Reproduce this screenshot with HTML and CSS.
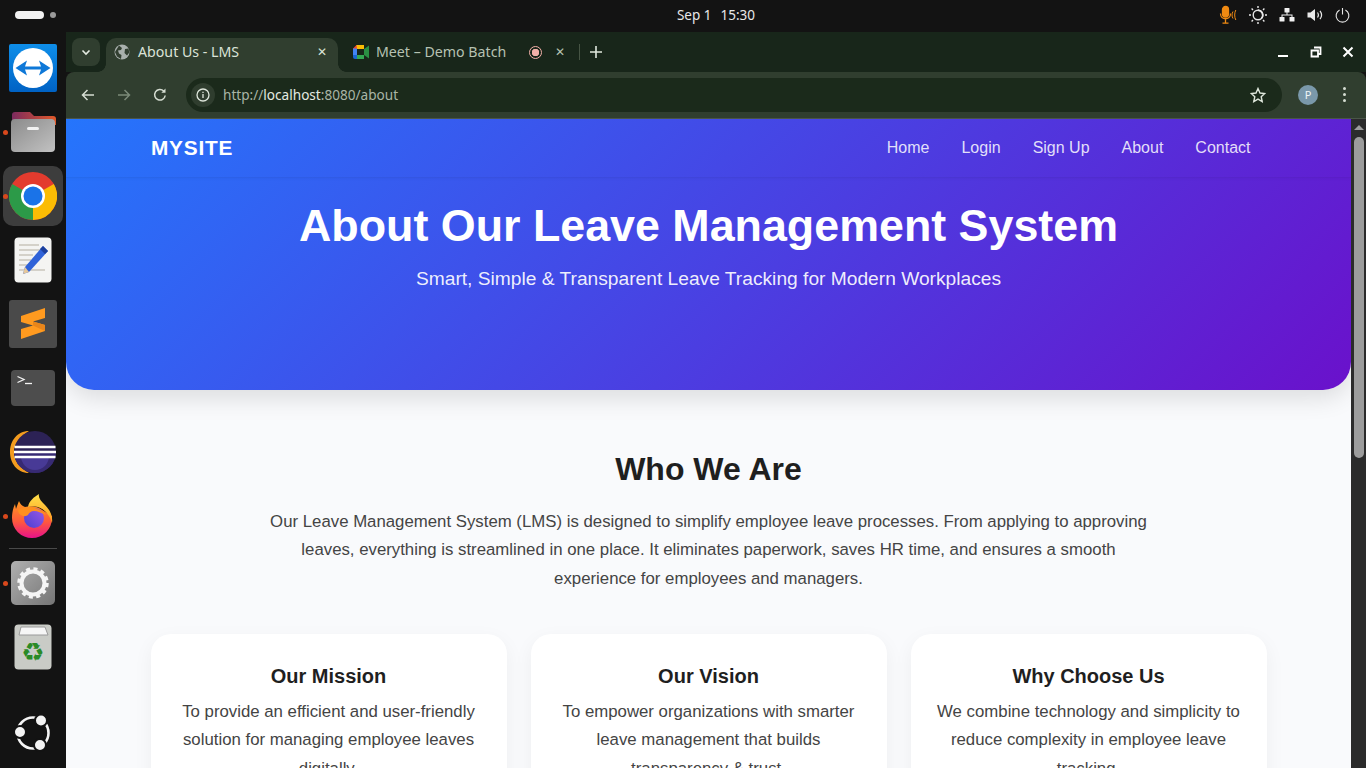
FILE: index.html
```html
<!DOCTYPE html>
<html lang="en">

<head>
    <meta charset="UTF-8">
    <meta name="viewport" content="width=device-width, initial-scale=1.0">
    <title>About Us - LMS</title>
    <link rel="stylesheet" href="styles.css">
</head>

<body>
    <header class="topbar">
        <div class="activities"><span class="pill"></span><span class="pill-dot"></span></div>
        <div></div>
        <div class="clock"><span>Sep 1</span><span>15:30</span></div>
        <div class="tray">
            <svg width="20" height="20" viewBox="-2 0 20 20" fill="none" stroke="#f08a12" stroke-width="1.3">
                <rect x="3.5" y="1.5" width="6" height="10.5" rx="3" fill="#f08a12" />
                <path d="M1.5 8.5c0 7 10 7 10 0M6.5 14v4M3.5 18.2h6" />
                <path d="M14 6.5c-1.300 2-1.300 5 0 7M16.800 5c-1.500 3-1.500 7 0 10" stroke-width="1" />
            </svg>
            <svg width="18" height="18" viewBox="0 0 18 18" fill="none" stroke="#e8e8e8" stroke-width="1.4">
                <circle cx="9" cy="9" r="4.8" />
                <path d="M9 4.2a4.8 4.8 0 0 1 3.4 8.2A5 5 0 0 0 9 4.2z" fill="#e8e8e8" />
                <path d="M9 0v2M9 16v2M0 9h2M16 9h2M2.6 2.6 4 4M14 14l1.4 1.4M2.6 15.4 4 14M14 4l1.4-1.4" />
            </svg>
            <svg width="16" height="14" viewBox="0 0 16 14" fill="#f2f2f2">
                <rect x="5.5" y="0" width="5" height="4.5" rx=".6" />
                <rect x="0.5" y="9" width="5" height="4.5" rx=".6" />
                <rect x="10.5" y="9" width="5" height="4.5" rx=".6" />
                <path d="M7.5 4h1v2.5h5V9h-1V7.5h-9V9h-1V6.5h5z" />
            </svg>
            <svg width="16" height="14" viewBox="0 0 16 14" fill="none" stroke="#e8e8e8" stroke-width="1.2">
                <path d="M0.5 4.5h3L8 1v12L3.5 9.5h-3z" fill="#e8e8e8" stroke="none" />
                <path d="M10.5 4.5c1 1.4 1 3.6 0 5M13 2.8c1.9 2.5 1.9 5.9 0 8.4" />
            </svg>
            <svg width="15" height="15" viewBox="0 0 15 15" fill="none" stroke="#e8e8e8" stroke-width="1.1">
                <path d="M4.6 2a6.4 6.4 0 1 0 5.8 0M7.5 0v6.5" />
            </svg>
        </div>
    </header>

    <div class="desktop">
        <nav class="dock">
            <div class="dock-item">
                <svg width="48" height="48" viewBox="0 0 48 48">
                    <defs>
                        <linearGradient id="tvBg" x1="0" y1="0" x2="0" y2="1">
                            <stop offset="0" stop-color="#0e8ee9" />
                            <stop offset="1" stop-color="#0062c4" />
                        </linearGradient>
                    </defs>
                    <rect width="48" height="48" rx="2" fill="url(#tvBg)" />
                    <circle cx="24" cy="24" r="20" fill="#fff" />
                    <path d="M6.500 24 18 16.500 16 22.500H32L30 16.500 41.500 24 30 31.500 32 25.500H16L18 31.500Z" fill="#0e78d8" />
                </svg>
            </div>
            <div class="dock-item running">
                <svg width="46" height="42" viewBox="0 0 46 42">
                    <defs>
                        <linearGradient id="fdTop" x1="0" y1="0" x2="1" y2="0">
                            <stop offset="0" stop-color="#7c2a5e" />
                            <stop offset="1" stop-color="#e2592a" />
                        </linearGradient>
                        <linearGradient id="fdBody" x1="0" y1="0" x2="1" y2="1">
                            <stop offset="0" stop-color="#8b8b8b" />
                            <stop offset="1" stop-color="#c2c2c2" />
                        </linearGradient>
                    </defs>
                    <path d="M2 12V4q0-3 3-3h15l4 4h19q3 0 3 3v6z" fill="url(#fdTop)" />
                    <rect x="1" y="8" width="44" height="33" rx="4" fill="url(#fdBody)" />
                    <rect x="17" y="16" width="12" height="3" rx="1.500" fill="#f2f2f2" />
                </svg>
            </div>
            <div class="dock-item active running">
                <svg width="48" height="48" viewBox="0 0 48 48">
                    <circle cx="24" cy="24" r="24" fill="#e33b2e" />
                    <path d="M24 24 44.800 12A24 24 0 0 1 24 48Z" fill="#fbbc04" />
                    <path d="M24 24 24 48A24 24 0 0 1 3.200 12Z" fill="#2c9a48" />
                    <circle cx="24" cy="24" r="12" fill="#fff" />
                    <circle cx="24" cy="24" r="9.500" fill="#1a73e8" />
                </svg>
            </div>
            <div class="dock-item">
                <svg width="38" height="46" viewBox="0 0 38 46">
                    <rect width="37" height="45" x=".5" y=".5" rx="4" fill="#f4f4f2" />
                    <path d="M5 8h20M5 13h26M5 18h14M5 23h12M5 28h10M5 33h26" stroke="#c9c5bc" stroke-width="1.600" />
                    <path d="M29 9l5 5-19 21-6 2 2-7z" fill="#2f62d8" />
                    <path d="M29 9l5 5-3 3-5-5z" fill="#1c3f9c" />
                    <path d="M9 37l2-7 4 5z" fill="#e6c79a" />
                </svg>
            </div>
            <div class="dock-item">
                <svg width="48" height="48" viewBox="0 0 48 48">
                    <rect width="48" height="48" rx="3" fill="#4a4a4a" />
                    <path d="M12 16 36 8V18L24 21.500 36 25V31L12 39V29L24 25.500 12 22Z" fill="#ff9a1f" />
                    <path d="M24 21.500 36 25V31L24 25.500Z" fill="#e8851a" />
                </svg>
            </div>
            <div class="dock-item">
                <svg width="44" height="36" viewBox="0 0 44 36">
                    <rect width="44" height="36" rx="4" fill="#4d4d4d" />
                    <path d="M6.500 6.500 13 9.500 6.500 12.500" fill="none" stroke="#f4f4f4" stroke-width="1.300" />
                    <path d="M14 13.500h7" stroke="#f4f4f4" stroke-width="1.300" />
                </svg>
            </div>
            <div class="dock-item">
                <svg width="48" height="44" viewBox="0 0 48 44">
                    <path d="M20 1C8 1 1 11 1 22s7 21 19 21C12 38 5 31 5 22S12 6 20 1z" fill="#f39c1f" />
                    <circle cx="26" cy="22" r="21" fill="#2c2255" />
                    <path d="M5 22a21 21 0 0 0 42 0z" fill="#372a73" />
                    <path d="M12 26a14 14 0 0 0 28 0z" fill="#483a96" />
                    <path d="M5.500 17h41M5 22h42M5.500 27h41" stroke="#fff" stroke-width="2.400" />
                </svg>
            </div>
            <div class="dock-item running">
                <svg width="44" height="44" viewBox="0 0 44 44">
                    <defs>
                        <linearGradient id="ffOuter" x1="0" y1="0" x2="0" y2="1">
                            <stop offset="0" stop-color="#ff9a1f" />
                            <stop offset=".55" stop-color="#ff5a3c" />
                            <stop offset="1" stop-color="#e8128a" />
                        </linearGradient>
                        <linearGradient id="ffFlame" x1="0" y1="0" x2="0" y2="1">
                            <stop offset="0" stop-color="#ffe04a" />
                            <stop offset="1" stop-color="#ff9a1f" />
                        </linearGradient>
                        <linearGradient id="ffGlobe" x1="1" y1="0" x2="0" y2="1">
                            <stop offset="0" stop-color="#9b59e8" />
                            <stop offset="1" stop-color="#4a3fd0" />
                        </linearGradient>
                    </defs>
                    <path d="M1 24C1 19 2 14 4 10l1 5C6 12 7 9 8 7c1 3 3 5 6 6 4-1 10-1 14 1l13 8v2a20 20 0 0 1-40 0z" fill="url(#ffOuter)" />
                    <path d="M17 13C18 7 23 3 28 0c-1 4 2 7 6 11 5 5 8 11 7 18-2-8-8-14-14-16-4-1-7-1-10 0z" fill="url(#ffFlame)" />
                    <circle cx="23" cy="24" r="10" fill="url(#ffGlobe)" />
                    <path d="M7 16c3-2 7-3 10-3 5 0 8 1 11 3 2 1 5 2 7 5-5-2-8-4-12-4-3 0-5 2-6 4-1 1-3 1-5 1-3-1-5-3-5-6z" fill="#ff8f1f" />
                </svg>
            </div>
            <hr class="dock-sep">
            <div class="dock-item running">
                <svg width="44" height="44" viewBox="0 0 44 44">
                    <defs>
                        <linearGradient id="setBg" x1="0" y1="0" x2="1" y2="1">
                            <stop offset="0" stop-color="#b0b0b0" />
                            <stop offset="1" stop-color="#757575" />
                        </linearGradient>
                    </defs>
                    <rect width="44" height="44" rx="5" fill="url(#setBg)" />
                    <circle cx="22" cy="22" r="11.500" fill="none" stroke="#f5f5f5" stroke-width="4" />
                    <circle cx="22" cy="22" r="14" fill="none" stroke="#f5f5f5" stroke-width="3.500" stroke-dasharray="4 3.330" />
                </svg>
            </div>
            <div class="dock-item">
                <svg width="38" height="46" viewBox="0 0 38 46">
                    <rect x=".5" y=".5" width="37" height="45" rx="4" fill="#c9cbc6" />
                    <path d="M5 11 7 3h24l3 8z" fill="#f6f6f6" stroke="#9a9a9a" />
                    <text class="recycle" x="19" y="37" text-anchor="middle">♻</text>
                </svg>
            </div>
            <div class="dock-item dock-bottom">
                <svg width="38" height="38" viewBox="0 0 38 38">
                    <circle cx="19" cy="19" r="15.500" fill="none" stroke="#f4f4f4" stroke-width="2.600" />
                    <g fill="#f4f4f4" stroke="#131313" stroke-width="2">
                        <circle cx="6" cy="18" r="6" />
                        <circle cx="27" cy="6.500" r="6" />
                        <circle cx="26" cy="31" r="6" />
                    </g>
                </svg>
            </div>
        </nav>

        <main class="browser">
            <div class="tabstrip">
                <button class="tab-search">
                    <svg width="12" height="12" viewBox="0 0 12 12" fill="none" stroke="#e4ebe2" stroke-width="1.600">
                        <path d="M2.500 4.500 6 8l3.500-3.500" />
                    </svg>
                </button>
                <div class="tab tab-active">
                    <svg width="16" height="16" viewBox="0 0 16 16">
                        <circle cx="8" cy="8" r="7.500" fill="#a9b0ad" />
                        <path d="M5 1.500 8 4 7 6 4 6.500 5 9.500 7.500 11 7 15 3 12.500 1 8ZM11 5l3.500-.5.800 4L13 11.500 10.500 9z" fill="#323f31" />
                    </svg>
                    <span class="tab-title">About Us - LMS</span>
                    <span class="tab-close">✕</span>
                </div>
                <div class="tab tab-meet">
                    <svg width="16" height="14" viewBox="0 0 16 14">
                        <path d="M0 3.500 3.500 0H11v4H4v6H0z" fill="#ea4335" />
                        <path d="M3.500 0H11v4H4z" fill="#fbbc04" />
                        <path d="M0 3.500h4V10H0z" fill="#4285f4" />
                        <path d="M0 10h4v4H2a2 2 0 0 1-2-2z" fill="#1967d2" />
                        <path d="M4 10h7v4H4z" fill="#34a853" />
                        <path d="M11 4v6l5 3.500V.5z" fill="#2a8f43" />
                    </svg>
                    <span class="tab-title">Meet – Demo Batch</span>
                    <span class="rec"></span>
                    <span class="tab-close">✕</span>
                </div>
                <span class="tab-sep"></span>
                <svg class="tab-new" width="12" height="12" viewBox="0 0 12 12" stroke="#dfe7dc" stroke-width="1.600">
                    <path d="M6 0v12M0 6h12" />
                </svg>
                <div class="window-controls">
                    <svg width="12" height="12" viewBox="0 0 12 12" stroke="#fff" stroke-width="2">
                        <path d="M1 10h10" />
                    </svg>
                    <svg width="12" height="12" viewBox="0 0 12 12" fill="none" stroke="#fff" stroke-width="1.800">
                        <path d="M4 1.500h6.500V8H8M1.500 4.500H8V10.500H1.500z" />
                    </svg>
                    <svg width="12" height="12" viewBox="0 0 12 12" stroke="#fff" stroke-width="2">
                        <path d="M1.500 1.500l9 9M10.500 1.500l-9 9" />
                    </svg>
                </div>
            </div>

            <div class="toolbar">
                <svg class="tool-btn" width="14" height="14" viewBox="0 0 14 14" fill="none" stroke="#d5ddd2" stroke-width="1.500">
                    <path d="M13 7H1.500M6.500 2 1.500 7l5 5" />
                </svg>
                <svg class="tool-btn" width="14" height="14" viewBox="0 0 14 14" fill="none" stroke="#7b8a78" stroke-width="1.500">
                    <path d="M1 7h11.500M7.500 2l5 5-5 5" />
                </svg>
                <svg class="tool-btn" width="14" height="14" viewBox="0 0 14 14" fill="none" stroke="#d5ddd2" stroke-width="1.500">
                    <path d="M12.200 7.500A5.300 5.300 0 1 1 10.700 3" />
                    <path d="M12.500 .5v4.200H8.300" fill="#d5ddd2" stroke="none" />
                </svg>
                <div class="omnibox">
                    <span class="site-info">
                        <svg width="14" height="14" viewBox="0 0 14 14" fill="none" stroke="#dfe7dc" stroke-width="1.300">
                            <circle cx="7" cy="7" r="6" />
                            <path d="M7 6v4M7 3.700v1.300" />
                        </svg>
                    </span>
                    <span class="url">http://<b>localhost</b>:8080/about</span>
                    <svg class="star" width="16" height="16" viewBox="0 0 16 16" fill="none" stroke="#dfe7dc" stroke-width="1.400">
                        <path d="M8 1.500l2 4.500 4.800.5-3.600 3.200 1 4.800L8 12.100 3.800 14.500l1-4.800L1.200 6.500 6 6z" />
                    </svg>
                </div>
                <span class="avatar">P</span>
                <span class="menu-dots"><i></i><i></i><i></i></span>
            </div>

            <div class="viewport">
                <div class="page">
                    <section class="hero">
                        <div class="navbar">
                            <a class="brand">MYSITE</a>
                            <div class="nav-links">
                                <a>Home</a>
                                <a>Login</a>
                                <a>Sign Up</a>
                                <a>About</a>
                                <a>Contact</a>
                            </div>
                        </div>
                        <h1>About Our Leave Management System</h1>
                        <p class="tagline">Smart, Simple &amp; Transparent Leave Tracking for Modern Workplaces</p>
                    </section>

                    <section class="about">
                        <h2>Who We Are</h2>
                        <p class="intro">Our Leave Management System (LMS) is designed to simplify employee leave processes. From applying to approving leaves, everything is streamlined in one place. It eliminates paperwork, saves HR time, and ensures a smooth experience for employees and managers.</p>
                        <div class="cards">
                            <div class="card">
                                <h3>Our Mission</h3>
                                <p>To provide an efficient and user-friendly solution for managing employee leaves digitally.</p>
                            </div>
                            <div class="card">
                                <h3>Our Vision</h3>
                                <p>To empower organizations with smarter leave management that builds transparency &amp; trust.</p>
                            </div>
                            <div class="card">
                                <h3>Why Choose Us</h3>
                                <p>We combine technology and simplicity to reduce complexity in employee leave tracking.</p>
                            </div>
                        </div>
                    </section>
                </div>
                <div class="scrollbar">
                    <span class="scroll-up"></span>
                    <span class="scroll-thumb"></span>
                </div>
            </div>
        </main>
    </div>
</body>

</html>
```

FILE: styles.css
```css
* {
    box-sizing: border-box;
}

html,
body {
    height: 768px;
    margin: 0;
    overflow: hidden;
}

body {
    display: flex;
    flex-direction: column;
    background-color: #131313;
    font-family: "Liberation Sans", Arial, sans-serif;
}

/* desktop top bar */
.topbar {
    display: grid;
    grid-template-columns: 66px 1fr auto 1fr;
    align-items: center;
    height: 32px;
    flex-shrink: 0;
    padding-bottom: 2px;
    background-color: #131313;
    color: #e8e8e8;
}

.activities {
    display: flex;
    align-items: center;
    gap: 6px;
    padding-left: 15px;
}

.pill {
    width: 29px;
    height: 8px;
    border-radius: 4px;
    background-color: #f2f2f2;
}

.pill-dot {
    width: 6px;
    height: 6px;
    border-radius: 50%;
    background-color: #9a9a9a;
}

.clock {
    display: flex;
    gap: 9px;
    font-family: "Noto Sans", sans-serif;
    font-size: 13.5px;
}

.tray {
    display: flex;
    align-items: center;
    justify-content: flex-end;
    gap: 12px;
    padding-right: 16px;
}

/* dock */
.desktop {
    display: flex;
    flex: 1;
    min-height: 0;
}

.dock {
    display: flex;
    flex-direction: column;
    align-items: center;
    width: 66px;
    flex-shrink: 0;
    padding: 4px 0 3px;
    background-color: #131313;
}

.dock-item {
    position: relative;
    display: flex;
    align-items: center;
    justify-content: center;
    width: 60px;
    height: 64px;
    flex-shrink: 0;
}

.dock-item.active {
    height: 60px;
    margin: 2px 0;
    border-radius: 10px;
    background-color: #3d3d3d;
}

.dock-item.running::before {
    content: "";
    position: absolute;
    left: 0;
    top: 50%;
    width: 5px;
    height: 5px;
    margin-top: -2px;
    border-radius: 50%;
    background-color: #d9481c;
}

.dock-sep {
    width: 48px;
    height: 1px;
    margin: 0 0 2px;
    border: none;
    background-color: #4a4a4a;
}

.dock-bottom {
    margin-top: auto;
}

.recycle {
    font-family: "DejaVu Sans", sans-serif;
    font-size: 26px;
    fill: #2a8a26;
}

/* browser chrome */
.browser {
    display: flex;
    flex-direction: column;
    flex: 1;
    min-width: 0;
}

.tabstrip {
    display: flex;
    align-items: flex-end;
    height: 40px;
    flex-shrink: 0;
    padding-left: 6px;
    background-color: #18261a;
}

.tab-search {
    display: flex;
    align-items: center;
    justify-content: center;
    width: 28px;
    height: 28px;
    margin: 0 6px 6px 0;
    padding: 0;
    border: none;
    border-radius: 8px;
    background-color: #303e2f;
}

.tab {
    position: relative;
    display: flex;
    align-items: center;
    height: 34px;
    padding-bottom: 6px;
    font-family: "Noto Sans", sans-serif;
    font-size: 14.200px;
}

.tab-active {
    width: 232px;
    padding-left: 8px;
    padding-right: 11px;
    border-radius: 10px 10px 0 0;
    background-color: #303e2f;
    color: #dbe3d8;
}

/* the little curves where the active tab meets the toolbar */
.tab-active::before,
.tab-active::after {
    content: "";
    position: absolute;
    bottom: 0;
    width: 8px;
    height: 8px;
}

.tab-active::before {
    left: -8px;
    background: radial-gradient(circle at 0 0, transparent 7.500px, #303e2f 8px);
}

.tab-active::after {
    right: -8px;
    background: radial-gradient(circle at 100% 0, transparent 7.500px, #303e2f 8px);
}

.tab-title {
    margin: 0 0 2px 8px;
    white-space: nowrap;
}

.tab-active .tab-title {
    flex: 1;
}

.tab-close {
    font-size: 12px;
    line-height: 1;
}

.tab-meet {
    width: 241px;
    padding-left: 15px;
    color: #b6c2b2;
}

.tab-meet .tab-title {
    width: 153px;
    margin-left: 7px;
}

.rec {
    width: 13px;
    height: 13px;
    margin-right: 13px;
    border: 1.500px solid #f3b0a8;
    border-radius: 50%;
    background: radial-gradient(circle, #f3b0a8 0 3.500px, transparent 4px);
}

.tab-sep {
    width: 1px;
    height: 16px;
    margin: 0 10px 12px 0;
    background-color: #465444;
}

.tab-new {
    margin: 0 0 14px 0;
}

.window-controls {
    display: flex;
    align-items: center;
    gap: 20px;
    margin: 0 12px 14px auto;
}

.window-controls svg:first-child {
    margin-right: 1px;
}

.toolbar {
    display: flex;
    align-items: center;
    height: 47px;
    flex-shrink: 0;
    padding: 0 20px 1px 15px;
    border-bottom: 1px solid #4a5549;
    border-radius: 8px 8px 0 0;
    background-color: #303e2f;
}

.tool-btn {
    margin-right: 22px;
}

.omnibox {
    display: flex;
    align-items: center;
    flex: 1;
    height: 34px;
    margin: 0 16px 0 -3px;
    padding: 0 16px 0 5px;
    border-radius: 17px;
    background-color: #1b2a1b;
}

.site-info {
    display: flex;
    align-items: center;
    justify-content: center;
    width: 24px;
    height: 24px;
    margin-right: 8px;
    border-radius: 50%;
    background-color: #2f3d2e;
}

.url {
    flex: 1;
    font-family: "Noto Sans", sans-serif;
    font-size: 13.600px;
    color: #a9b5a6;
}

.url b {
    font-weight: 400;
    color: #e4ebe1;
}

.avatar {
    display: flex;
    align-items: center;
    justify-content: center;
    width: 20px;
    height: 20px;
    margin-right: 25px;
    border-radius: 50%;
    background-color: #7a98aa;
    color: #f0f4f6;
    font-family: "Noto Sans", sans-serif;
    font-size: 11px;
}

.menu-dots {
    display: flex;
    flex-direction: column;
    gap: 3px;
}

.menu-dots i {
    width: 3px;
    height: 3px;
    border-radius: 50%;
    background-color: #d5ddd2;
}

/* page */
.viewport {
    display: flex;
    flex: 1;
    min-height: 0;
    overflow: hidden;
}

.page {
    flex: 1;
    min-width: 0;
    background-color: #f9fafc;
}

.scrollbar {
    display: flex;
    flex-direction: column;
    align-items: center;
    width: 15px;
    flex-shrink: 0;
    background-color: #2b2b2b;
}

.scroll-up {
    width: 0;
    height: 0;
    margin: 6px 0 7px;
    border: 5px solid transparent;
    border-top: 0;
    border-bottom-color: #9c9c9c;
}

.scroll-thumb {
    width: 10px;
    height: 321px;
    border-radius: 5px;
    background-color: #9c9c9c;
}

.hero {
    height: 271px;
    border-radius: 0 0 28px 28px;
    background: linear-gradient(135deg, #2575fc, #6a11cb);
    box-shadow: 0 8px 24px rgba(0, 0, 0, 0.12);
    color: #fff;
    text-align: center;
}

.navbar {
    display: flex;
    align-items: center;
    justify-content: space-between;
    height: 59px;
    padding: 0 100.500px 0 85px;
    border-bottom: 1px solid rgba(0, 0, 0, 0.05);
    box-shadow: 0 1px 3px rgba(0, 0, 0, 0.04);
}

.brand {
    font-size: 20.800px;
    font-weight: 700;
    letter-spacing: 0.8px;
}

.nav-links {
    display: flex;
    gap: 32px;
}

.nav-links a {
    font-size: 16px;
    color: rgba(255, 255, 255, 0.85);
}

.hero h1 {
    margin: 21px 0 0;
    font-size: 44.800px;
    line-height: 52px;
}

.tagline {
    margin: 16px 0 0;
    font-size: 19.200px;
    line-height: 24px;
    color: rgba(255, 255, 255, 0.92);
}

.about {
    padding-top: 60px;
    text-align: center;
}

.about h2 {
    margin: 0;
    font-size: 32px;
    line-height: 38px;
    color: #1f1f1f;
}

.intro {
    width: 900px;
    margin: 19.700px auto 0;
    font-size: 16.800px;
    line-height: 28.560px;
    color: #444;
}

.cards {
    display: grid;
    grid-template-columns: repeat(3, 1fr);
    gap: 24px;
    width: 1116px;
    margin: 40.300px auto 0;
}

.card {
    padding: 28px 24px;
    border-radius: 20px;
    background-color: #fff;
    box-shadow: 0 6px 20px rgba(0, 0, 0, 0.05);
}

.card h3 {
    margin: 0 0 8px;
    font-size: 20px;
    line-height: 28px;
    color: #1f1f1f;
}

.card p {
    margin: 0;
    font-size: 16.800px;
    line-height: 28.560px;
    color: #444;
}
```
